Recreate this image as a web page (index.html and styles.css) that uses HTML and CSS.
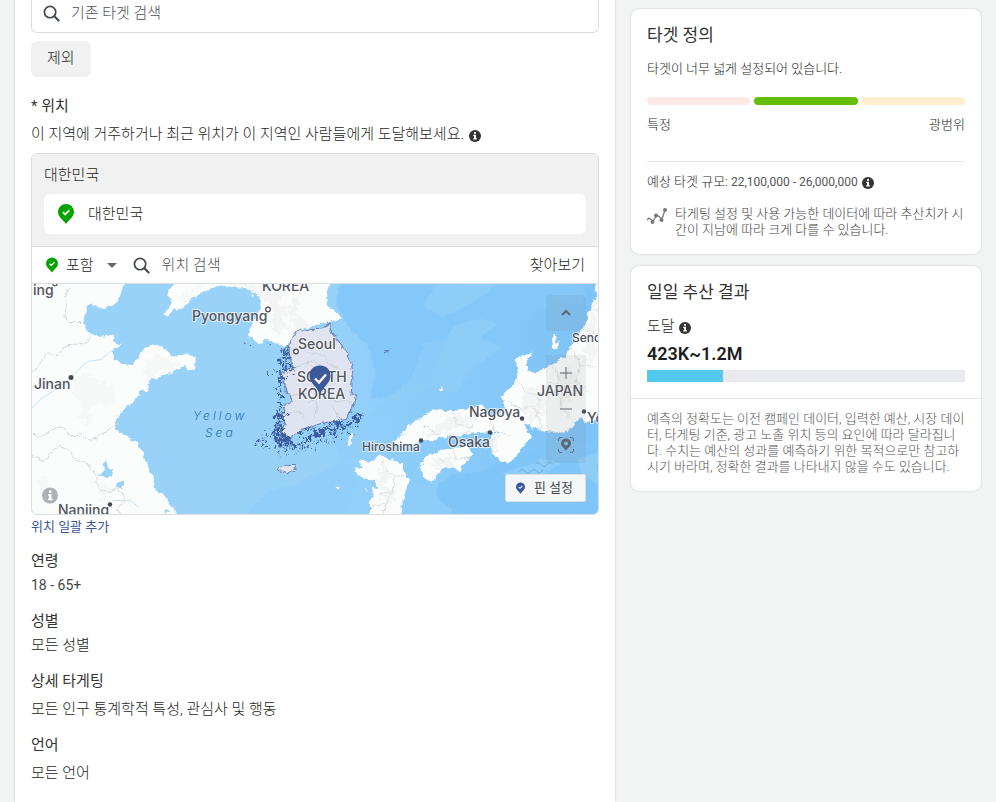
FILE: index.html
```html
<!DOCTYPE html>
<html lang="ko">
<head>
  <meta charset="UTF-8">
  <meta name="viewport" content="width=device-width, initial-scale=1.0">
  <title>타겟 설정</title>
  <link rel="stylesheet" href="styles.css">
</head>
<body>
  <svg class="sprite" aria-hidden="true">
    <symbol id="icon-search" viewBox="0 0 18 18">
      <circle cx="7.5" cy="7.5" r="6" fill="none" stroke="currentColor" stroke-width="1.8"/>
      <path d="M12 12l4.5 4.5" stroke="currentColor" stroke-width="2.2" stroke-linecap="round"/>
    </symbol>
    <symbol id="icon-pin" viewBox="0 0 16 20">
      <path fill="currentColor" d="M8 0a8 8 0 0 0-8 8c0 5 5.5 8 8 12 2.5-4 8-7 8-12a8 8 0 0 0-8-8z"/>
      <path d="M4.8 8.2l2.3 2.3 4.2-4.2" fill="none" stroke="#fff" stroke-width="1.8"/>
    </symbol>
    <symbol id="icon-info" viewBox="0 0 12 12">
      <circle cx="6" cy="6" r="6" fill="currentColor"/>
      <path fill="#fff" d="M5 2h2v1.8H5zM4.3 4.7H7v3.6h.9v1.3H4.200V8.300H5V6h-.7z"/>
    </symbol>
  </svg>

  <div class="page">
    <main class="panel">
      <label class="search">
        <svg class="icon-search"><use href="#icon-search"/></svg>
        <input type="text" placeholder="기존 타겟 검색" aria-label="기존 타겟 검색">
      </label>
      <button type="button" class="btn-exclude">제외</button>

      <h2 class="field-title location-title">* 위치</h2>
      <p class="location-desc">이 지역에 거주하거나 최근 위치가 이 지역인 사람들에게 도달해보세요. <svg class="icon-info"><use href="#icon-info"/></svg></p>

      <div class="location-box">
        <div class="selected">
          <div class="selected-country">대한민국</div>
          <div class="selected-item">
            <svg class="pin pin-lg"><use href="#icon-pin"/></svg>
            <span>대한민국</span>
          </div>
        </div>

        <div class="toolbar">
          <button type="button" class="mode">
            <svg class="pin pin-sm"><use href="#icon-pin"/></svg>
            <span>포함</span>
            <i class="caret"></i>
          </button>
          <label class="place-search">
            <svg class="icon-search"><use href="#icon-search"/></svg>
            <input type="text" placeholder="위치 검색" aria-label="위치 검색">
          </label>
          <button type="button" class="browse">찾아보기</button>
        </div>

        <div class="map">
          <svg class="map-canvas" viewBox="0 0 566 231" preserveAspectRatio="xMidYMid slice">
            <defs>
              <linearGradient id="sea" x1="0" x2="1" y1="0" y2="0">
                <stop offset="0" stop-color="#99d2f9"/>
                <stop offset=".5" stop-color="#99d2f9"/>
                <stop offset=".65" stop-color="#8dcdfa"/>
                <stop offset="1" stop-color="#7dc3f7"/>
              </linearGradient>
              <filter id="coast" x="-2%" y="-2%" width="104%" height="104%">
                <feTurbulence type="fractalNoise" baseFrequency=".18" numOctaves="2" seed="4"/>
                <feDisplacementMap in="SourceGraphic" scale="6" xChannelSelector="R" yChannelSelector="G"/>
              </filter>
              <filter id="islets" x="-10%" y="-10%" width="120%" height="120%">
                <feTurbulence type="fractalNoise" baseFrequency=".2" numOctaves="2" seed="9"/>
                <feDisplacementMap in="SourceGraphic" scale="14" xChannelSelector="R" yChannelSelector="G"/>
              </filter>
            </defs>
            <rect width="566" height="231" fill="url(#sea)"/>

            <!-- sea depth -->
            <g filter="url(#coast)">
              <path fill="#83c8f9" d="M308 0l-4 20 14 26 18 16 8 30-6 24 22-4 20-18 12-34 36-10 24 18 20-14 30-26 20-8h30V0z"/>
              <path fill="#8fcdf9" d="M404 0l-12 22 18 12 30-14 26-20zM420 44l26-10 20 6-18 14 22 10-30 22-16 24-30-8 14-30zM350 118l20-14 26-8-12 16-30 18-22 6z"/>
              <path fill="#80c5f8" d="M394 206l26-14 30-4 30-16 40-10 46-4v73H392z"/>
              <path fill="#8fcdf9" d="M376 231l10-30 22-10-4 20 18 20zM470 190l40-14 20 4-30 16zM545 175l21-6v32l-16-8z"/>
              <path fill="#91cef9" d="M216 231l20-24 30-6 30-18 24-4 6 20-14 32zM300 150l20-26 16 4 12 24-14 22-24 4z"/>
            </g>

            <!-- land -->
            <g fill="#fbfcfc" filter="url(#coast)">
              <path d="M-9-9H97L90 6l-3 10-9 7-9 2-7-4-7 2-2 7-2 8 4 8 6 5 10 3 10-2 3 8 6 1-9 5v10l9 5h8l6-5 6-8 5-4 9-3 9 5 3 5 9 2 10-3 9 5-3 11-5 1-3-5-13 6-13 6-9 3-2 9-7 5-5 2-4 7-7 3-4 7-5 8-1 8 8 5 6 4 10 5 4 10 6 15 5 10 1 11 9 5 4 9 6 5 8 12H-9z"/>
              <path d="M141-9v9l-6 11 6 4-3 8-7 8 5 2 7-7 7-1 10-10 21-11 17-2 17 3 10 5 4 5-2 16-7 7-2 10-3 4 15 9 4-6 12 6 12 2 6-5 8-14 20-4 18-5-7-8-7-5-1-12 5-14V-9z"/>
              <path d="M338 178l10-7 7 4 10 3 6 2v6l6 12-4 13-7 28h-28v-21l3-7-1-7 7 2-4-8-9-3-8-3-4-7 9 0-4-8z"/>
              <path d="M358 161l10-8 10-12 23-15 20 2 29-7 4 7 6 4 9-2 4-9-3-8 16-18-3-18 4-4 15-5-7 10v9l9 3 17-10 12-6 6-12 12-18 7-17 6-20 1-16h20v126l-12 6-6 6-4 8-8 2-8-5-7 10-7 5h-16l-12-2 5-3-10 1-7-5 2 10 5 3-12 13-10 13h-8l-8-10v-13l6-8-15 1-30 3-16 3-8 4-8-3-14 7z"/>
              <path d="M398 171l13-5 14-3 11-1 4 9-10 12-2 6-7-6-11 2-10 14-7-3-5-15z"/>
              <path d="M520 54l4-3v8l4-2-4 10-3-3z"/>
              <path d="M406 105l4-2 1 3-3 1zM317 153l4-3-1 6-3 7-1-2zM303 203l5 1-2 2zM334 203l3 4-2 3z"/>
            </g>
            <g fill="#99d2f9" filter="url(#coast)">
              <path d="M72 180l2-4 2 8 5 3-2 6-5 1-9-4 6-1zM86 198l6-1v7l-7 1zM107 108l5-2v4l-5 1zM131 229q4-5 9 2z"/>
            </g>

            <!-- relief -->
            <g fill="#f6f8f7" filter="url(#islets)">
              <path d="M42 96l12-6 12 8 14 4 4 14-10 10-6-8-10 6 4 14-10 4-6-8 4-14-10-8zM115 78l10-8 12 6 12 2-8 8-14 2-10 8-8-4zM70 196l8 6-4 12 10 6-12 4-6-12zM6 196l12-4-4 12 10 4-14 8zM150 12l10-6 8-4-6-2h12l-12 10-14 8z"/>
            </g>
            <g fill="#f2f5f3" filter="url(#islets)">
              <path d="M200 0h20l10 6 10-4 12 8-4 10 10 4-8 14 8 8-12 4-8-10 4-14-12-12zM262 8l6 12-6 12 12 4 8 6-14 6-10-12z"/>
              <path d="M350 184l8 6-4 12 10 8-6 12-8-8-4-14zM412 136l14-6 16 6-12 6-20 8-20 4zM462 142l6 14-4 14-8-8zM494 104l12-2 10 14-6 16-12 8-8-18zM524 90l14-6 8 10-8 20-12 6zM552 60l6-26 6-20v60l-8 6zM404 176l14-4 10 2-12 8-16 4z"/>
            </g>

            <!-- rivers and province borders -->
            <g fill="none" stroke-linejoin="round">
              <path d="M0 125l8-9 8-5 12-8 14-12 13-13 14-2 14-12M81 217h18l8 7" stroke="#c3e2f6"/>
              <path d="M0 90l8-10 8-11 8 2 14-10 15-1 6-8M33 14l4-10M33 14l3 11-5 6 7 8 16 0M0 151l10 1 14-7 6-2 8 10 11-3 6 7 10-3 12-8 5-5h6M0 172l12 6 8-9 5-7 12 4 6 10 14 6 8 10v12l10 4 8-3 7 4 1 10-6 6 6 9" stroke="#d6d6d8" filter="url(#coast)"/>
            </g>

            <!-- South Korea -->
            <g filter="url(#coast)">
              <path fill="#dfe4f0" stroke="#6f86bb" stroke-width="1.2" d="M256 66l2-10 8-9 12-1h12l3-2 3-5 4 11 11 13 8 15 2 13-1 10-1 10 5 1-3 11-8 13-12 2-13 2-10 3-10 5-10 7-7-4-1-6 3-5-2-10 2-9 7-3-4-7-3-10-5-11 7-4 6-1-2-7z"/>
              <path fill="#dfe4f0" stroke="#6f86bb" d="M246 188l2-4 8-3h8l-1 5-7 4z"/>
              <path fill="none" stroke="#c9ced8" d="M266 60l8 8 18 4 6 10 10 2M262 85l18-8 12 8 6 12-8 12 12 8 18 2M256 112l20-2 10 12-4 12M254 130l14-2 6 8M290 110l-14 10M300 120l6 14"/>
              <path d="M352 70l5-3" stroke="#5a79b5" stroke-width="2"/>
            </g>
            <g fill="none" stroke="#3b5c9f" filter="url(#islets)">
              <path stroke-width="3" stroke-dasharray="3 3" d="M248 64l10 4-10 4 8 4-10 4 12 6-12 2 4 10-6 8 6 6-4 10 6 8-6 8 4 6"/>
              <path stroke-width="4" stroke-dasharray="4 2" d="M244 130l6 6-8 4 10 5-12 3 12 4-10 4 14 0-10 5 14 0-6-8 8 10 10-5 6-6 8 0-6-6 8 6 8-6 6 3 8-6-4-4 12 2 8-4-6-4 10 0"/>
              <path stroke-width="2" stroke-dasharray="2 4" d="M232 148l8 8-14 2 16 8 10 6 6-6 8 4 6-6 8 2 10-10 10 2 12-10 8 0 6-6M248 140l-6 12 12 12 20-2 14-14 12-2 10-8 6 0M254 80l4 14-10 4M214 62l2-4M236 62l4-2M236 90l4-2"/>
              <path stroke-width="2" stroke-dasharray="3 2" d="M266 152l12-8 10 4 8-8 12 2M250 66l10 10M252 72l6 10-8-2"/>
            </g>
            <g fill="none" stroke="#dededf" filter="url(#coast)">
              <path d="M350 175l4 12 10 6 10-2M364 193l-4 14-14 4M360 207l-10 24M340 222l16-2M392 142l18 12M420 128l6 12 14 4M440 122l4 14-10 14M456 132l6 14 16 6M474 116l14 10 10-4 10 8M486 98l10 12 12 2 10-14M508 112l-4 20 8 12M518 98l14 6 16-4 10 10M520 84l8 12M538 64l10 16 16 4M552 46l14 4M548 80l-4 20M532 104l-4 20 10 10M404 172l12 10M420 164l4 12 14-2M462 152l-4 22"/>
            </g>
            <path d="M487 188q3-4 6 0t6 0 6 0 6-2M503 181q3-4 6 0t6 0 6 0" fill="none" stroke="#5fb0e2"/>

            <g class="map-label">
              <text x="1" y="11">ing</text>
              <text x="230" y="7">KOREA</text>
              <text x="160" y="37">Pyongyang</text>
              <text x="266" y="65">Seoul</text>
              <text x="265" y="98">SOUTH</text>
              <text x="266" y="115">KOREA</text>
              <text x="2" y="105">Jinan</text>
              <text x="26" y="231">Nanjing</text>
              <text x="505" y="112">JAPAN</text>
              <text x="437" y="133">Nagoya</text>
              <text x="416" y="163">Osaka</text>
              <text x="555" y="139">Yo</text>
              <text class="minor" x="330" y="167">Hiroshima</text>
              <text class="minor" x="540" y="58">Send</text>
            </g>
            <g class="sea-label">
              <text x="161" y="136">Yellow</text>
              <text x="173" y="153">Sea</text>
            </g>
            <g fill="#454953">
              <circle cx="39" cy="94" r="2.5"/>
              <circle cx="78" cy="221" r="2.2"/>
              <circle cx="389" cy="157" r="2.2"/>
              <circle cx="458" cy="149" r="2.2"/>
              <circle cx="490" cy="135" r="2.2"/>
              <circle cx="552" cy="128" r="2.2"/>
            </g>
            <g fill="#fff" stroke="#454953" stroke-width="1.2">
              <circle cx="236" cy="26" r="2.3"/>
              <circle cx="264" cy="68" r="2.3"/>
              <circle cx="23" cy="0" r="2.3"/>
            </g>
            <path fill="#3b5998" d="M288 82c-6 0-10.500 4-10.500 10.500 0 7 7.500 10.500 10.500 18.500 3-8 10.500-11.500 10.500-18.500 0-6.500-4.500-10.500-10.500-10.500z"/>
            <path d="M283 95l4 4 7-8" fill="none" stroke="#fff" stroke-width="2.4"/>
            <g transform="translate(10 204)">
              <circle cx="8" cy="8" r="8" fill="#aeb0b4"/>
              <path fill="#fff" d="M7 3h2.500v2.400H7zM6 6.500h3.500v4.500h1v1.800H6V11h1V8.200H6z"/>
            </g>
          </svg>

          <div class="map-controls">
            <button type="button" aria-label="접기">
              <svg width="12" height="8" viewBox="0 0 12 8"><path d="M2 6l4-4 4 4"/></svg>
            </button>
            <div class="map-zoom">
              <button type="button" aria-label="확대">
                <svg width="12" height="12" viewBox="0 0 12 12"><path class="thin" d="M0 6h12M6 0v12"/></svg>
              </button>
              <button type="button" aria-label="축소">
                <svg width="12" height="12" viewBox="0 0 12 12"><path class="thin" d="M0 6h12"/></svg>
              </button>
              <button type="button" aria-label="현재 위치">
                <svg width="18" height="18" viewBox="0 0 18 18">
                  <path class="thin" d="M1.500 5V3.500a2 2 0 0 1 2-2H5M13 1.500h1.500a2 2 0 0 1 2 2V5M16.500 13v1.500a2 2 0 0 1-2 2H13M5 16.500H3.500a2 2 0 0 1-2-2V13"/>
                  <path class="solid" fill-rule="evenodd" d="M9 2.500a5 5 0 0 0-5 5c0 3 3.500 4.500 5 7.500 1.500-3 5-4.500 5-7.500a5 5 0 0 0-5-5zm0 3a2 2 0 1 1 0 4 2 2 0 0 1 0-4z"/>
                </svg>
              </button>
            </div>
          </div>
          <button type="button" class="btn-pin">
            <svg class="pin pin-xs"><use href="#icon-pin"/></svg>
            핀 설정
          </button>
        </div>
      </div>
      <a href="#" class="bulk-link">위치 일괄 추가</a>

      <section class="field">
        <h2 class="field-title">연령</h2>
        <p class="latin">18 - 65+</p>
      </section>
      <section class="field">
        <h2 class="field-title">성별</h2>
        <p>모든 성별</p>
      </section>
      <section class="field field-loose">
        <h2 class="field-title">상세 타게팅</h2>
        <p>모든 인구 통계학적 특성, 관심사 및 행동</p>
      </section>
      <section class="field field-loose">
        <h2 class="field-title">언어</h2>
        <p>모든 언어</p>
      </section>
    </main>

    <aside class="side">
      <section class="card definition">
        <h2 class="card-title">타겟 정의</h2>
        <p class="summary">타겟이 너무 넓게 설정되어 있습니다.</p>
        <div class="gauge">
          <span class="gauge-narrow"></span>
          <span class="gauge-good"></span>
          <span class="gauge-broad"></span>
        </div>
        <div class="gauge-labels">
          <span>특정</span>
          <span>광범위</span>
        </div>
        <p class="size">예상 타겟 규모: <span class="num">22,100,000 - 26,000,000</span> <svg class="icon-info"><use href="#icon-info"/></svg></p>
        <div class="note">
          <svg class="icon-trend" viewBox="0 0 20 18">
            <path d="M0 12l2-2 4 3 4-6 5 4 3-9" fill="none" stroke="currentColor" stroke-width="1.3"/>
            <g fill="currentColor"><circle cx="5.5" cy="14" r="2"/><circle cx="9" cy="7.5" r="2"/><circle cx="14.5" cy="12" r="2"/><circle cx="18" cy="2" r="2"/></g>
          </svg>
          <p>타게팅 설정 및 사용 가능한 데이터에 따라 추산치가 시간이 지남에 따라 크게 다를 수 있습니다.</p>
        </div>
      </section>

      <section class="card">
        <div class="daily">
          <h2 class="card-title">일일 추산 결과</h2>
          <p class="reach">도달 <svg class="icon-info"><use href="#icon-info"/></svg></p>
          <p class="reach-value">423K~1.2M</p>
          <div class="bar"><div class="bar-fill" style="width: 24%"></div></div>
        </div>
        <p class="disclaimer">예측의 정확도는 이전 캠페인 데이터, 입력한 예산, 시장 데이터, 타게팅 기준, 광고 노출 위치 등의 요인에 따라 달라집니다. 수치는 예산의 성과를 예측하기 위한 목적으로만 참고하시기 바라며, 정확한 결과를 나타내지 않을 수도 있습니다.</p>
      </section>
    </aside>
  </div>
</body>
</html>
```
FILE: styles.css
```css
* {
  box-sizing: border-box;
}

body {
  margin: 0;
  background: #f1f4f3;
  color: #1c1e21;
  font-family: Roboto, "Noto Sans CJK KR", sans-serif;
  font-size: 15px;
  font-weight: 300;
  line-height: 20px;
}

h2,
p {
  margin: 0;
}

button,
input {
  padding: 0;
  border: 0;
  background: none;
  color: inherit;
  font: inherit;
}

button {
  cursor: pointer;
}

input {
  flex: 1;
  min-width: 0;
  outline: none;
}

input::placeholder {
  color: #4b4f56;
  opacity: 1;
}

.sprite {
  display: none;
}

.page {
  display: flex;
  align-items: flex-start;
  gap: 16px;
  min-height: 100vh;
  padding: 0 15px;
}

.panel {
  flex: 1;
  min-width: 0;
  min-height: 100vh;
  padding: 0 16px 16px;
  background: #fff;
  box-shadow: 0 0 2px rgba(0, 0, 0, 0.2);
}

.icon-search {
  flex: none;
  width: 17px;
  height: 17px;
  color: #444950;
}

.icon-info {
  width: 12px;
  height: 12px;
  margin-left: 1px;
  color: #333;
  vertical-align: -3px;
}

/* search */
.search {
  display: flex;
  align-items: center;
  gap: 11px;
  height: 33px;
  padding: 0 11px 6px;
  border: 1px solid #dadde1;
  border-top: 0;
  border-radius: 0 0 6px 6px;
}

.btn-exclude {
  display: block;
  height: 36px;
  margin-top: 8px;
  padding: 0 16px 2px;
  border-radius: 6px;
  background: #f1f1f1;
}

/* location */
.field-title {
  color: #333;
  font-size: 15px;
  font-weight: 400;
}

.location-title {
  margin-top: 19px;
}

.location-desc {
  margin-top: 8px;
}

.location-box {
  margin-top: 9px;
  border: 1px solid #dadde1;
  border-radius: 6px;
  overflow: hidden;
}

.selected {
  padding: 11px 12px 12px;
  background: #f1f1f1;
  border-bottom: 1px solid #dadde1;
}

.selected-item {
  display: flex;
  align-items: center;
  gap: 14px;
  height: 40px;
  margin-top: 9px;
  padding: 0 14px;
  border-radius: 6px;
  background: #fff;
}

.pin {
  flex: none;
  color: #00a400;
}

.pin-lg {
  width: 16px;
  height: 20px;
}

.pin-sm {
  width: 12px;
  height: 16px;
}

.pin-xs {
  width: 9px;
  height: 12px;
  color: #3b5998;
}

.toolbar {
  display: flex;
  align-items: center;
  gap: 16px;
  height: 37px;
  padding: 0 13px 0 14px;
  border-bottom: 1px solid #dadde1;
}

.mode {
  display: flex;
  align-items: center;
  gap: 8px;
}

.caret {
  margin-left: 5px;
  border: 5px solid transparent;
  border-top-color: #606770;
  border-bottom: 0;
}

.place-search {
  display: flex;
  flex: 1;
  align-items: center;
  gap: 12px;
}

/* map */
.map {
  position: relative;
  height: 230px;
}

.map-canvas {
  display: block;
  width: 100%;
  height: 100%;
}

.map-label {
  fill: #50545e;
  stroke: #fff;
  stroke-width: 2px;
  stroke-opacity: 0.7;
  paint-order: stroke;
  font-family: Inter, sans-serif;
  font-size: 14px;
  font-weight: 500;
}

.map-label .minor {
  font-size: 12px;
}

.sea-label {
  fill: #2878ae;
  font-family: Inter, sans-serif;
  font-size: 12px;
  font-style: italic;
  letter-spacing: 3px;
}

.map-controls {
  position: absolute;
  top: 11px;
  right: 12px;
  display: flex;
  flex-direction: column;
  gap: 24px;
}

.map-controls button {
  display: flex;
  align-items: center;
  justify-content: center;
  width: 40px;
  height: 36px;
  border-radius: 4px;
  background: rgba(120, 120, 120, 0.11);
}

.map-controls path {
  fill: none;
  stroke: #606770;
  stroke-width: 2px;
}

.map-controls .thin {
  stroke-width: 1px;
}

.map-controls .solid {
  fill: #606770;
  stroke: none;
}

.map-zoom button {
  border-radius: 0;
}

.btn-pin {
  position: absolute;
  right: 12px;
  bottom: 12px;
  display: flex;
  align-items: center;
  gap: 9px;
  height: 28px;
  padding: 0 12px 0 10px;
  border: 1px solid #dadde1;
  border-radius: 2px;
  background: #f5f6f7;
  color: #444950;
  font-size: 13px;
  font-weight: 400;
}

.bulk-link {
  display: block;
  margin-top: 2px;
  color: #385898;
  font-size: 13px;
  font-weight: 400;
  text-decoration: none;
}

/* fields */
.field {
  margin-top: 16px;
}

.bulk-link + .field {
  margin-top: 14px;
}

.field p {
  margin-top: 4px;
}

.field .latin {
  color: #444;
  font-size: 14px;
  font-weight: 400;
}

.field-loose p {
  margin-top: 8px;
}

/* side column */
.side {
  width: 350px;
  padding-top: 9px;
}

.card {
  margin-bottom: 12px;
  border-radius: 8px;
  background: #fff;
  box-shadow: 0 0 2px rgba(0, 0, 0, 0.2);
  font-size: 13px;
  line-height: 16px;
}

.card-title {
  color: #333;
  font-size: 17px;
  font-weight: 400;
  line-height: 24px;
}

.definition {
  padding: 14px 16px 16px;
}

.summary {
  margin-top: 14px;
}

.gauge {
  display: flex;
  gap: 4px;
  margin-top: 20px;
}

.gauge span {
  flex: 1;
  height: 8px;
  border-radius: 4px;
}

.gauge-narrow {
  background: #ffe9e6;
}

.gauge-good {
  background: #63be09;
}

.gauge-broad {
  background: #ffefcc;
}

.gauge-labels {
  display: flex;
  justify-content: space-between;
  margin-top: 12px;
  padding-bottom: 28px;
  border-bottom: 1px solid #e5e5e5;
}

.size {
  margin-top: 12px;
}

.num {
  color: #555;
  font-size: 12px;
  font-weight: 400;
}

.note {
  display: flex;
  gap: 8px;
  margin-top: 16px;
  color: #444;
}

.icon-trend {
  flex: none;
  width: 20px;
  height: 18px;
  margin-top: 2px;
  color: #777;
}

.daily {
  padding: 14px 16px 16px;
  border-bottom: 1px solid #e5e5e5;
}

.reach {
  margin-top: 12px;
  font-size: 15px;
  line-height: 20px;
}

.reach-value {
  margin-top: 8px;
  font-size: 18px;
  font-weight: 600;
  line-height: 20px;
}

.bar {
  height: 12px;
  margin-top: 6px;
  background: #e9eaee;
}

.bar-fill {
  height: 100%;
  background: #54c7ec;
}

.disclaimer {
  padding: 12px 16px 16px;
  color: #555;
}
```
